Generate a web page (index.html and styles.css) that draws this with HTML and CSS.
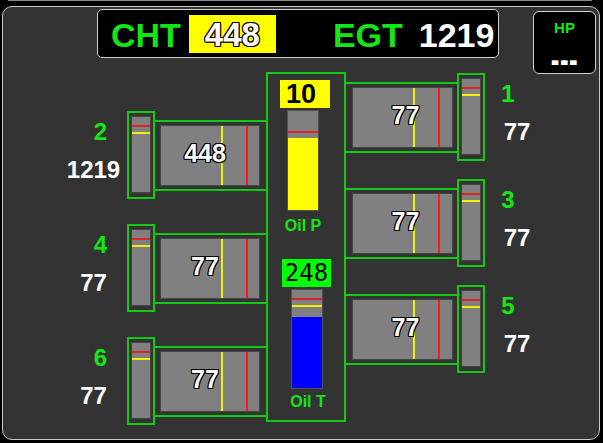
FILE: index.html
```html
<!DOCTYPE html>
<html lang="en">
<head>
    <meta charset="UTF-8">
    <title>Engine Monitor</title>
    <link rel="stylesheet" href="styles.css">
</head>
<body>
    <div class="top-line"></div>
    <section class="panel">
        <div class="header">
            <div class="readout">
                <span class="readout-name">CHT</span>
                <span class="readout-hot outlined">448</span>
                <span class="readout-name egt">EGT</span>
                <span class="readout-value">1219</span>
            </div>
            <div class="hp-box">
                <span class="hp-title">HP</span>
                <span class="hp-value">---</span>
            </div>
        </div>

        <div class="gauges">
            <!-- left bank -->
            <div class="bank bank-left">
                <div class="cyl">
                    <div class="cyl-label"><span class="cyl-num">2</span><span class="cyl-egt">1219</span></div>
                    <div class="cht-box"><div class="cht-bar"><i class="mark red"></i><i class="mark yellow"></i></div></div>
                    <div class="egt-box"><div class="egt-bar"><i class="vmark yellow"></i><i class="vmark red"></i><span class="outlined">448</span></div></div>
                </div>
                <div class="cyl">
                    <div class="cyl-label"><span class="cyl-num">4</span><span class="cyl-egt">77</span></div>
                    <div class="cht-box"><div class="cht-bar"><i class="mark red"></i><i class="mark yellow"></i></div></div>
                    <div class="egt-box"><div class="egt-bar"><i class="vmark yellow"></i><i class="vmark red"></i><span class="outlined">77</span></div></div>
                </div>
                <div class="cyl">
                    <div class="cyl-label"><span class="cyl-num">6</span><span class="cyl-egt">77</span></div>
                    <div class="cht-box"><div class="cht-bar"><i class="mark red"></i><i class="mark yellow"></i></div></div>
                    <div class="egt-box"><div class="egt-bar"><i class="vmark yellow"></i><i class="vmark red"></i><span class="outlined">77</span></div></div>
                </div>
            </div>

            <!-- oil -->
            <div class="oil">
                <div class="oil-p-value">10</div>
                <div class="oil-bar oil-p-bar">
                    <div class="oil-empty"><i class="mark red"></i></div>
                    <div class="oil-fill yellow-fill"></div>
                </div>
                <div class="oil-label oil-p-label">Oil P</div>

                <div class="oil-t-value">248</div>
                <div class="oil-bar oil-t-bar">
                    <div class="oil-empty"><i class="mark red t-red"></i><i class="mark yellow t-yellow"></i></div>
                    <div class="oil-fill blue-fill"></div>
                </div>
                <div class="oil-label oil-t-label">Oil T</div>
            </div>

            <!-- right bank -->
            <div class="bank bank-right">
                <div class="cyl">
                    <div class="egt-box"><div class="egt-bar"><i class="vmark yellow"></i><i class="vmark red"></i><span class="outlined">77</span></div></div>
                    <div class="cht-box"><div class="cht-bar"><i class="mark red"></i><i class="mark yellow"></i></div></div>
                    <div class="cyl-label"><span class="cyl-num">1</span><span class="cyl-egt">77</span></div>
                </div>
                <div class="cyl">
                    <div class="egt-box"><div class="egt-bar"><i class="vmark yellow"></i><i class="vmark red"></i><span class="outlined">77</span></div></div>
                    <div class="cht-box"><div class="cht-bar"><i class="mark red"></i><i class="mark yellow"></i></div></div>
                    <div class="cyl-label"><span class="cyl-num">3</span><span class="cyl-egt">77</span></div>
                </div>
                <div class="cyl">
                    <div class="egt-box"><div class="egt-bar"><i class="vmark yellow"></i><i class="vmark red"></i><span class="outlined">77</span></div></div>
                    <div class="cht-box"><div class="cht-bar"><i class="mark red"></i><i class="mark yellow"></i></div></div>
                    <div class="cyl-label"><span class="cyl-num">5</span><span class="cyl-egt">77</span></div>
                </div>
            </div>
        </div>
    </section>
</body>
</html>
```

FILE: styles.css
```css
* {
    margin: 0;
    padding: 0;
    box-sizing: border-box;
}

body {
    background: #000;
    width: 603px;
    height: 443px;
    overflow: hidden;
    font-family: "Liberation Sans", Arial, sans-serif;
    font-weight: bold;
}

.top-line {
    height: 1px;
    margin: 0 11px 0 8px;
    background: #8a8a8a;
}

.panel {
    margin: 5px 3px 0 2px;
    height: 434px;
    border: 1px solid #c8c8c8;
    border-radius: 10px;
    background: #333;
}

.outlined {
    color: #fff;
    text-shadow: -1px -1px 0 #000, 1px -1px 0 #000, -1px 1px 0 #000, 1px 1px 0 #000,
                 0 -1px 0 #000, 0 1px 0 #000, -1px 0 0 #000, 1px 0 0 #000;
}

/* header */
.header {
    display: flex;
    align-items: flex-start;
    height: 65px;
}

.readout {
    margin: 2px 0 0 94px;
    width: 402px;
    height: 49px;
    border: 1px solid #d0d0d0;
    border-radius: 5px;
    background: #000;
    display: flex;
    align-items: center;
    padding: 2px 0 0 13px;
    font-size: 34px;
    line-height: 1;
}

.readout-name {
    color: #14e614;
}

.readout-hot {
    margin-left: 8px;
    width: 87px;
    height: 38px;
    margin-top: -1px;
    background: #ffff00;
    display: flex;
    align-items: center;
    justify-content: center;
    font-size: 33px;
}

.egt {
    margin-left: 57px;
}

.readout-value {
    margin-left: 16px;
    color: #fff;
}

.hp-box {
    margin: 4px 0 0 34px;
    width: 63px;
    height: 63px;
    border: 1px solid #d0d0d0;
    border-radius: 6px;
    background: #000;
    display: flex;
    flex-direction: column;
    align-items: center;
    padding-top: 8px;
}

.hp-title {
    color: #14e614;
    font-size: 15px;
    line-height: 16px;
}

.hp-value {
    display: inline-block;
    margin-top: 13px;
    color: #fff;
    font-size: 26px;
    line-height: 20px;
    letter-spacing: 0.5px;
    transform: scaleY(1.5);
}

/* gauges */
.gauges {
    display: flex;
    align-items: flex-start;
}

.bank {
    display: flex;
    flex-direction: column;
}

.bank-left {
    margin: 39px 0 0 57px;
    gap: 25px;
}

.bank-right {
    margin-top: 1px;
    gap: 18px;
}

.cyl {
    display: flex;
    align-items: center;
    height: 88px;
}

.cyl-label {
    align-self: stretch;
    display: flex;
    flex-direction: column;
    align-items: center;
    padding-top: 8px;
    gap: 12px;
    font-size: 24px;
    line-height: 26px;
}

.bank-left .cyl-label {
    width: 67px;
}

.bank-left .cyl-num {
    padding-left: 14px;
}

.bank-right .cyl-label {
    width: 56px;
}

.bank-right .cyl-num {
    padding-right: 10px;
}

.bank-right .cyl-egt {
    padding-left: 8px;
}

.cyl-num {
    color: #14e614;
}

.cyl-egt {
    color: #fff;
}

.cht-box {
    width: 28px;
    height: 88px;
    border: 2px solid #14c814;
    padding: 3px 2px 4px;
}

.cht-bar {
    position: relative;
    height: 100%;
    border: 1px solid #454545;
    background: #808080;
}

.mark {
    position: absolute;
    left: 0;
    right: 0;
    height: 2px;
}

.mark.red {
    top: 8px;
    background: #e02424;
}

.mark.yellow {
    top: 15px;
    background: #f0f000;
}

.egt-box {
    width: 111px;
    height: 71px;
    border-top: 2px solid #14c814;
    border-bottom: 2px solid #14c814;
    padding: 3px 0;
}

.bank-left .egt-box {
    padding-left: 5px;
}

.bank-right .egt-box {
    padding-left: 6px;
}

.egt-bar {
    position: relative;
    width: 100px;
    height: 61px;
    border: 1px solid #454545;
    background: #808080;
    display: flex;
    align-items: center;
    justify-content: center;
    font-size: 25px;
    padding-bottom: 3px;
}

.bank-left .egt-bar {
    padding-right: 10px;
}

.bank-right .egt-bar {
    width: 101px;
    padding-left: 6px;
}

.vmark {
    position: absolute;
    top: 0;
    bottom: 0;
    width: 2px;
}

.vmark.yellow {
    left: 60px;
    background: #f0f000;
}

.vmark.red {
    left: 85px;
    background: #ff1a1a;
}

.egt-bar span {
    position: relative;
}

/* oil */
.oil {
    width: 80px;
    height: 350px;
    border: 2px solid #14c814;
    display: flex;
    flex-direction: column;
    align-items: center;
}

.oil-p-value {
    margin: 6px 2px 0 0;
    width: 50px;
    height: 28px;
    background: #ffff00;
    color: #000;
    font-size: 27px;
    line-height: 28px;
    padding-left: 6px;
}

.oil-bar {
    width: 32px;
    height: 101px;
    margin-top: 2px;
    border: 1px solid #505050;
    display: flex;
    flex-direction: column;
}

.oil-p-bar {
    margin-right: 6px;
}

.oil-empty {
    position: relative;
    height: 27px;
    background: #808080;
}

.oil-p-bar .mark.red {
    top: 20px;
}

.oil-fill {
    flex: 1;
}

.yellow-fill {
    background: #ffff00;
}

.blue-fill {
    background: #0000ff;
}

.oil-label {
    color: #14e614;
    font-size: 16px;
    line-height: 18px;
}

.oil-p-label {
    margin: 6px 6px 0 0;
}

.oil-t-value {
    margin: 24px 0 0 1px;
    width: 49px;
    height: 28px;
    background: #00ff00;
    color: #000;
    font-family: "DejaVu Sans Mono", monospace;
    font-weight: normal;
    font-size: 24px;
    line-height: 28px;
    text-align: center;
}

.oil-t-bar {
    height: 100px;
    margin-left: 2px;
}

.oil-t-bar .oil-empty {
    height: 27px;
}

.t-red {
    top: 13px;
}

.t-yellow {
    top: 18px;
}

.oil-t-label {
    margin: 4px 0 0 4px;
}
```
